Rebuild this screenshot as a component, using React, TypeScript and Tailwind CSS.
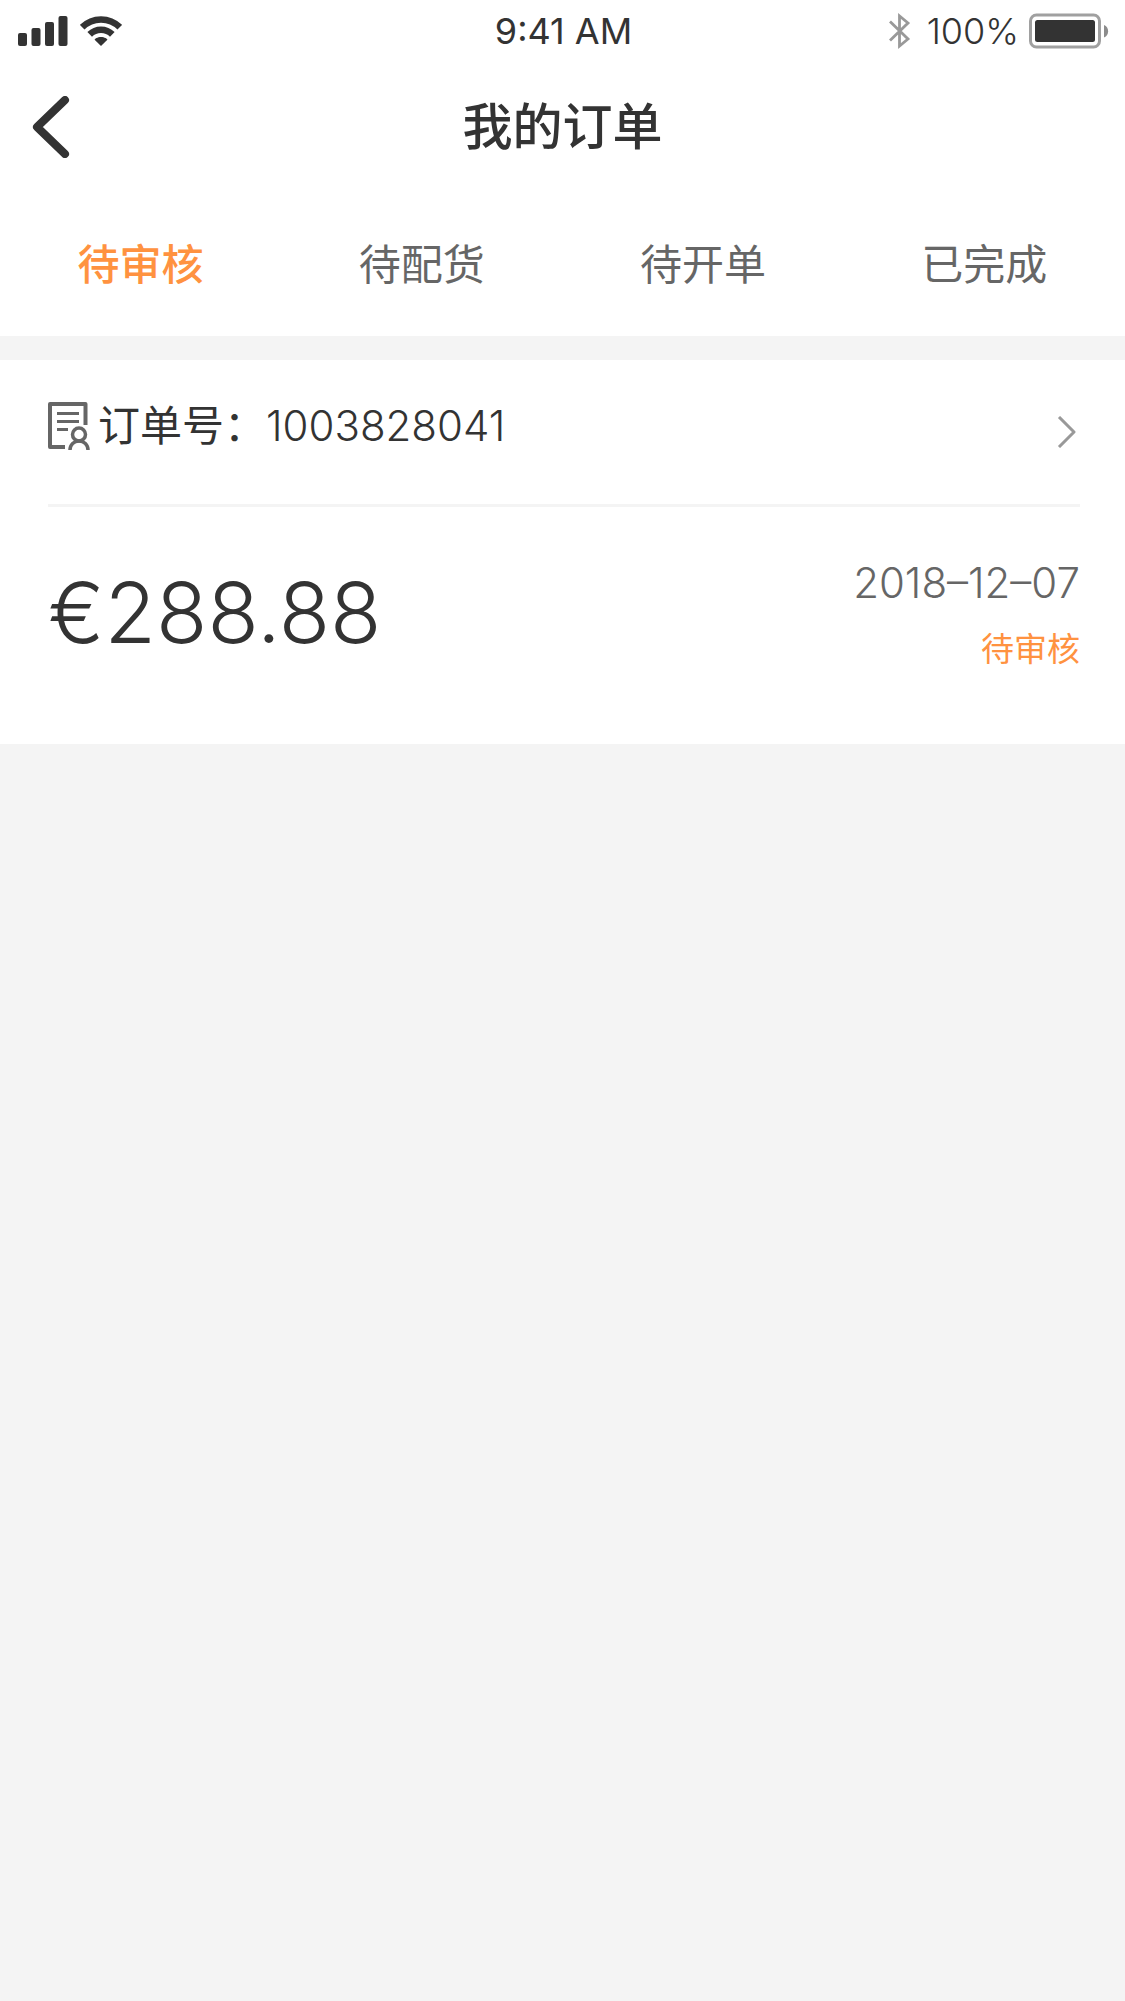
const tabs = ['待审核', '待配货', '待开单', '已完成'];

function SignalIcon() {
  return (
    <svg width="50" height="30" viewBox="0 0 50 30" fill="#333333" aria-hidden="true">
      <rect x="0" y="17" width="9" height="13" rx="2" />
      <rect x="13.500" y="12" width="9" height="18" rx="2" />
      <rect x="27" y="6" width="9" height="24" rx="2" />
      <rect x="40.500" y="0" width="9" height="30" rx="2" />
    </svg>
  );
}

function WifiIcon() {
  return (
    <svg width="42" height="30" viewBox="0 0 42 30" aria-hidden="true">
      <g fill="none" stroke="#333333" strokeWidth="6.500">
        <path d="M2.200 11.200A26.500 26.500 0 0 1 39.800 11.200" />
        <path d="M9.700 18.400A16 16 0 0 1 32.300 18.400" />
      </g>
      <path d="M21 30L14.600 23.800C14.500 23 17.500 21 21 21S27.500 23 27.400 23.800Z" fill="#333333" />
    </svg>
  );
}

function BluetoothIcon() {
  return (
    <svg width="22" height="36" viewBox="0 0 22 36" fill="none" stroke="#999999" strokeWidth="2.800" aria-hidden="true">
      <path d="M1 8.500L19 26L10.500 33V3L19 10L1 27.500" />
    </svg>
  );
}

function BatteryIcon() {
  return (
    <svg width="80" height="36" viewBox="0 0 80 36" aria-hidden="true">
      <rect x="1.500" y="2" width="69" height="32" rx="6" fill="none" stroke="#a0a0a0" strokeWidth="3" />
      <rect x="6" y="7" width="60" height="22" rx="2.500" fill="#333333" />
      <path d="M75 12C80.500 14 80.500 22.500 75 24.500Z" fill="#8c8c8c" />
    </svg>
  );
}

function OrderIcon() {
  return (
    <svg width="42" height="48" viewBox="0 0 42 48" fill="none" stroke="#666666" strokeWidth="4" aria-hidden="true">
      <path d="M37.500 23V2H2V45H17" strokeLinejoin="round" />
      <path d="M9 11.500H31M9 19.500H31M9 27.500H20" strokeWidth="3" />
      <circle cx="31" cy="32.500" r="6.500" strokeWidth="3.500" />
      <path d="M22 48C22 42.500 26 39 31 39S40 42.500 40 48" strokeWidth="3.500" />
    </svg>
  );
}

export default function App() {
  return (
    <div className="min-h-screen bg-[#f4f4f4] font-['Inter','Noto_Sans_CJK_SC',sans-serif] text-[#333333]">
      <header className="bg-white">
        <div className="grid h-[60px] grid-cols-[1fr_auto_1fr] items-center pt-px pr-4 pl-[18px] text-4xl">
          <div className="flex items-center gap-3">
            <SignalIcon />
            <WifiIcon />
          </div>
          <time className="leading-[60px]">9:41 AM</time>
          <div className="flex items-center justify-end gap-2.5">
            <BluetoothIcon />
            <span className="ml-1.5 font-light leading-[60px]">100%</span>
            <BatteryIcon />
          </div>
        </div>
        <div className="grid h-[132px] grid-cols-[1fr_auto_1fr] items-center px-8 pt-0.5">
          <button type="button" aria-label="返回" className="justify-self-start">
            <svg width="38" height="62" viewBox="0 0 38 62" fill="none" stroke="#333333" strokeWidth="8" strokeLinecap="round" strokeLinejoin="round" aria-hidden="true">
              <path d="M33 4L5 31L33 58" />
            </svg>
          </button>
          <h1 className="text-[50px] font-medium leading-[72px]">我的订单</h1>
        </div>
        <nav className="grid h-36 grid-cols-4 text-[42px] text-[#666666]">
          {tabs.map((tab, index) => (
            <button
              key={tab}
              type="button"
              className={index === 0 ? 'pt-px font-medium text-[#ff9240]' : 'pt-px font-normal'}
            >
              {tab}
            </button>
          ))}
        </nav>
      </header>
      <main className="mt-6">
        <article className="bg-white pr-[45px] pl-12">
          <a href="#order" className="flex h-[147px] items-center border-b-3 border-[#f4f4f4] pr-[3px]">
            <span className="flex flex-1 items-center gap-2 pb-3">
              <OrderIcon />
              <span className="text-[42px] leading-[60px]">
                订单号：<span className="font-light">1003828041</span>
              </span>
            </span>
            <svg width="20" height="32" viewBox="0 0 20 32" fill="none" stroke="#999999" strokeWidth="3" strokeLinejoin="round" aria-hidden="true">
              <path d="M2 1L17 16L2 31" />
            </svg>
          </a>
          <div className="flex h-[237px] items-start justify-between pt-[46px]">
            <strong className="text-[84px] font-light leading-[120px]">€288.88</strong>
            <div className="text-right">
              <time dateTime="2018-12-07" className="block text-[42px] font-light leading-[60px] text-[#666666]">2018–12–07</time>
              <p className="mt-3 text-[33px] leading-[48px] text-[#ff9240]">待审核</p>
            </div>
          </div>
        </article>
      </main>
    </div>
  );
}
